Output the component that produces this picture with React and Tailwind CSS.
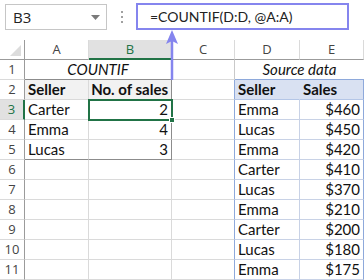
import React from 'react';

const cols = ['A', 'B', 'C', 'D', 'E'];

const source = [
    ['Emma', '$460'],
    ['Lucas', '$450'],
    ['Emma', '$420'],
    ['Carter', '$410'],
    ['Lucas', '$370'],
    ['Emma', '$210'],
    ['Carter', '$200'],
    ['Lucas', '$180'],
    ['Emma', '$175'],
];

const countif = [
    ['Carter', 2],
    ['Emma', 4],
    ['Lucas', 3],
];

const cellFont = { fontFamily: 'Lato, "Liberation Sans", sans-serif' };
const headFont = { fontFamily: '"Open Sans", "Noto Sans", sans-serif' };

const Cell = ({ className = '', children }) => (
    <div className={`h-[20px] border-b border-r border-[#dadada] flex items-center px-[3px] text-[15px] text-[#111] leading-none overflow-hidden whitespace-nowrap ${className}`} style={cellFont}>
        {children}
    </div>
);

const RowHead = ({ n, active }) => (
    <div
        className={`h-[20px] border-b border-[#dadada] flex items-center justify-center text-[13px] leading-none ${active ? 'bg-[#e1e1e1] text-[#217346] border-r-2 border-r-[#217346]' : 'bg-white text-[#444] border-r border-r-[#9b9b9b]'}`}
        style={headFont}
    >
        {n}
    </div>
);

export default function App() {
    const rows = [];

    for (let r = 1; r <= 11; r++) {
        rows.push(<RowHead key={`h${r}`} n={r} active={r === 3} />);

        // columns A:B
        if (r === 1) {
            rows.push(
                <Cell key="ab1" className="col-span-2 justify-center italic border-b-[#8c8c8c]">COUNTIF</Cell>
            );
        } else if (r === 2) {
            rows.push(<Cell key="a2" className="bg-[#f2f2f2] font-bold">Seller</Cell>);
            rows.push(<Cell key="b2" className="bg-[#f2f2f2] font-bold justify-end border-r-[#8c8c8c]">No. of sales</Cell>);
        } else if (r <= 5) {
            const [name, n] = countif[r - 3];
            const last = r === 5 ? 'border-b-[#8c8c8c]' : '';
            rows.push(<Cell key={`a${r}`} className={last}>{name}</Cell>);
            rows.push(<Cell key={`b${r}`} className={`justify-end border-r-[#8c8c8c] ${last}`}>{n}</Cell>);
        } else {
            rows.push(<Cell key={`a${r}`} />);
            rows.push(<Cell key={`b${r}`} />);
        }

        // column C
        rows.push(<Cell key={`c${r}`} className={r === 1 ? 'border-r-[#c9c9c9]' : 'border-r-[#8ea9db]'} />);

        // columns D:E
        if (r === 1) {
            rows.push(
                <Cell key="de1" className="col-span-2 justify-center italic border-b-[#8ea9db] border-r-0">Source data</Cell>
            );
        } else if (r === 2) {
            rows.push(<Cell key="d2" className="bg-[#d9e1f2] font-bold border-b-[#b4c6e7] border-r-[#d9e1f2]">Seller</Cell>);
            rows.push(<Cell key="e2" className="bg-[#d9e1f2] font-bold border-b-[#b4c6e7] border-r-[#8ea9db]">Sales</Cell>);
        } else {
            const [name, v] = source[r - 3];
            rows.push(<Cell key={`d${r}`} className="border-b-[#c8d2e6] border-r-[#c8d2e6]">{name}</Cell>);
            rows.push(<Cell key={`e${r}`} className="justify-end border-b-[#c8d2e6] border-r-[#8ea9db]">{v}</Cell>);
        }
    }

    return (
        <div className="w-[364px] h-[280px] bg-white overflow-hidden relative select-none">
            {/* formula bar */}
            <div className="h-[40px] flex items-start pt-[4px]">
                <div className="ml-[5px] w-[102px] h-[26px] border border-[#c6c6c6] flex items-center justify-between pl-[7px] pr-[6px]">
                    <span className="text-[15px] text-[#222] leading-none" style={headFont}>B3</span>
                    <svg width="9" height="5" viewBox="0 0 9 5"><path d="M0 0h9L4.5 5z" fill="#7a7a7a" /></svg>
                </div>
                <div className="w-[29px] h-[26px] flex flex-col items-center justify-center gap-[3px]">
                    <div className="w-[2px] h-[2px] bg-[#a0a0a0]" />
                    <div className="w-[2px] h-[2px] bg-[#a0a0a0]" />
                    <div className="w-[2px] h-[2px] bg-[#a0a0a0]" />
                </div>
                <div className="-mt-[1px] w-[213px] h-[27px] border-2 border-[#8585ee] flex items-center pl-[12px]">
                    <span className="text-[14px] text-[#222] leading-none whitespace-nowrap" style={cellFont}>=COUNTIF(D:D, @A:A)</span>
                </div>
            </div>

            {/* sheet */}
            <div className="grid grid-cols-[25px_64px_83px_63px_65px_64px]">
                {/* column headers */}
                <div className="h-[20px] border-b border-r border-[#9b9b9b] bg-white relative">
                    <svg className="absolute right-[3px] bottom-[3px]" width="11" height="11" viewBox="0 0 11 11"><path d="M11 0v11H0z" fill="#dcdcdc" /></svg>
                </div>
                {cols.map((c) => (
                    <div
                        key={c}
                        className={`h-[20px] flex items-center justify-center text-[13px] leading-none border-r border-[#dadada] ${c === 'B' ? 'bg-[#e1e1e1] text-[#217346] border-b-2 border-b-[#217346]' : 'bg-white text-[#444] border-b border-b-[#9b9b9b]'}`}
                        style={headFont}
                    >
                        {c}
                    </div>
                ))}
                {rows}
            </div>

            {/* selected cell B3 */}
            <div className="absolute left-[88px] top-[99px] w-[85px] h-[22px] border-2 border-[#217346] pointer-events-none">
                <div className="absolute -right-[4px] -bottom-[4px] w-[6px] h-[6px] bg-[#217346] border border-white" />
            </div>

            {/* arrow from formula to cell */}
            <svg className="absolute left-[164px] top-[29px] pointer-events-none" width="16" height="52" viewBox="0 0 16 52">
                <path d="M8 12V51" stroke="#8585ee" strokeWidth="2.5" />
                <path d="M8 1L14 15L8 12L2 15Z" fill="#8585ee" />
            </svg>
        </div>
    );
}
